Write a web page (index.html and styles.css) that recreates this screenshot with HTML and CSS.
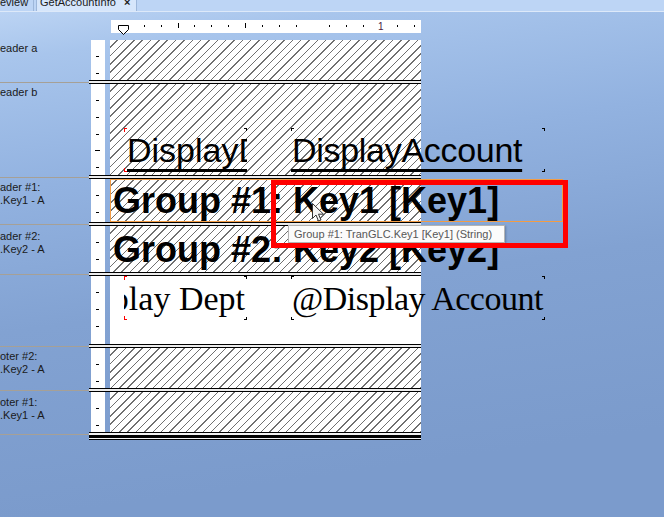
FILE: index.html
```html
<!DOCTYPE html>
<html lang="en">
<head>
    <meta charset="UTF-8">
    <meta name="viewport" content="width=device-width, initial-scale=1.0">
    <title>GetAccountInfo - Report Designer</title>
    <link rel="stylesheet" href="styles.css">
</head>
<body>
    <div class="tabbar">
        <div class="tab">eview</div>
        <div class="tab tab-active">GetAccountInfo <span class="tab-close">×</span></div>
    </div>

    <div class="hruler">
        <svg class="marker" width="11" height="10" viewBox="0 0 11 10">
            <path d="M0.5 0.5 H10.5 V4.5 L5.5 9.5 L0.5 4.5 Z" fill="#fff" stroke="#000" stroke-width="1"/>
        </svg>
        <span class="hruler-num">1</span>
    </div>

    <div class="designer">
        <!-- header a -->
        <div class="row band-a">
            <div class="label">eader a</div>
            <div class="page">
                <div class="vruler"></div>
                <div class="area hatch"></div>
            </div>
        </div>
        <div class="row sep">
            <div class="label-line"></div>
            <div class="dbl"></div>
        </div>

        <!-- header b -->
        <div class="row band-b">
            <div class="label">eader b</div>
            <div class="page">
                <div class="vruler vruler-long"></div>
                <div class="area hatch area-fields">
                    <div class="field field-short corners-red">
                        <div class="hdr-text">DisplayDept</div>
                    </div>
                    <div class="field field-wide corners">
                        <div class="hdr-text hdr-text-tight">DisplayAccount</div>
                    </div>
                </div>
            </div>
        </div>
        <div class="row sep">
            <div class="label-line"></div>
            <div class="dbl"></div>
        </div>

        <!-- group header 1 -->
        <div class="row band-g1">
            <div class="label">ader #1:<br>.Key1 - A</div>
            <div class="page">
                <div class="vruler"></div>
                <div class="area hatch">
                    <div class="group-box">Group #1: Key1 [Key1]</div>
                </div>
            </div>
        </div>
        <div class="row sep">
            <div class="label-line"></div>
            <div class="dbl"></div>
        </div>

        <!-- group header 2 -->
        <div class="row band-g2">
            <div class="label label-low">ader #2:<br>.Key2 - A</div>
            <div class="page">
                <div class="vruler"></div>
                <div class="area hatch">
                    <div class="group-text">Group #2: Key2 [Key2]</div>
                </div>
            </div>
        </div>
        <div class="row sep">
            <div class="label-line"></div>
            <div class="dbl"></div>
        </div>

        <!-- detail -->
        <div class="row band-detail">
            <div class="label"></div>
            <div class="page">
                <div class="vruler"></div>
                <div class="area area-plain area-detail">
                    <div class="field field-short corners-red detail-clip">
                        <div class="detail-text">@Display Dept</div>
                    </div>
                    <div class="field field-wide corners">
                        <div class="detail-text detail-text-left">@Display Account</div>
                    </div>
                </div>
            </div>
        </div>
        <div class="row sep">
            <div class="label-line"></div>
            <div class="dbl"></div>
        </div>

        <!-- group footer 2 -->
        <div class="row band-f2">
            <div class="label">oter #2:<br>.Key2 - A</div>
            <div class="page">
                <div class="vruler"></div>
                <div class="area hatch"></div>
            </div>
        </div>
        <div class="row sep">
            <div class="label-line"></div>
            <div class="dbl"></div>
        </div>

        <!-- group footer 1 -->
        <div class="row band-f1">
            <div class="label label-low">oter #1:<br>.Key1 - A</div>
            <div class="page">
                <div class="vruler"></div>
                <div class="area hatch"></div>
            </div>
        </div>
        <div class="row sep-end">
            <div class="label-line label-line-top"></div>
            <div class="dbl-end"></div>
        </div>
    </div>

    <div class="tooltip">Group #1: TranGLC.Key1 [Key1] (String)</div>
    <svg class="cursor" width="13" height="20" viewBox="0 0 13 20">
        <path d="M0.5 0.5 L0.5 15.5 L4 12 L6.5 18 L9 17 L6.5 11.2 L11.5 11.2 Z" fill="#f4f4f4" stroke="#333" stroke-width="1" stroke-linejoin="round"/>
    </svg>
    <div class="highlight"></div>
</body>
</html>
```

FILE: styles.css
```css
body {
    margin: 0;
    width: 664px;
    height: 517px;
    overflow: hidden;
    position: relative;
    font-family: "Liberation Sans", Arial, sans-serif;
    background: linear-gradient(172deg, #c0d7f5 0px, #a8c5ec 60px, #92b2e0 190px, #82a2d2 330px, #7b9bcc 517px);
}

/* tab strip */
.tabbar {
    display: flex;
    height: 11px;
    overflow: hidden;
    background: #bdd5f5;
    border-bottom: 1px solid #dde9f9;
    font-size: 11px;
    color: #1b1b1b;
}

.tab {
    margin-top: -4px;
    line-height: 13px;
    height: 15px;
    width: 33px;
    border-right: 1px solid #9db7da;
    white-space: nowrap;
}

.tab-active {
    width: 96px;
    margin-left: 2px;
    padding-left: 3px;
    background: #d6e6fb;
    border-left: 1px solid #9db7da;
}

.tab-close {
    margin-left: 5px;
    font-weight: bold;
}

/* top ruler */
.hruler {
    margin: 8px 0 0 111px;
    width: 310px;
    height: 13px;
    display: flex;
    align-items: flex-start;
    background:
        repeating-linear-gradient(to right, transparent 0 66.5px, #000 66.5px 67.5px) 0 3px / 100% 5px no-repeat,
        repeating-linear-gradient(to right, transparent 0 15.875px, #000 15.875px 16.875px) 0 5px / 100% 2px no-repeat,
        #fff;
}

.marker {
    display: block;
    margin: 5px 0 0 7px;
}

.hruler-num {
    margin: 1px 0 0 248px;
    padding: 0 1px;
    background: #fff;
    font-size: 10px;
    line-height: 11px;
    color: #4a1840;
}

/* design surface */
.designer {
    margin-top: 7px;
}

.row {
    display: flex;
}

.label {
    width: 89px;
    flex-shrink: 0;
    box-sizing: border-box;
    padding-top: 2px;
    font-size: 11px;
    line-height: 13px;
    color: #1a1a1a;
    white-space: nowrap;
    overflow: hidden;
}

.label-low {
    padding-top: 4px;
}

.page {
    width: 332px;
    display: flex;
    flex-shrink: 0;
}

.vruler {
    width: 14px;
    margin: 0 5px 0 2px;
    flex-shrink: 0;
    background:
        repeating-linear-gradient(to bottom, transparent 0 15.875px, #000 15.875px 16.875px) 5px 0 / 3px 100% no-repeat,
        #fff;
}

.vruler-long {
    background:
        linear-gradient(#000, #000) 4px 66px / 5px 1px no-repeat,
        repeating-linear-gradient(to bottom, transparent 0 15.875px, #000 15.875px 16.875px) 5px 0 / 3px 100% no-repeat,
        #fff;
}

.area {
    width: 311px;
    flex-shrink: 0;
    box-sizing: border-box;
    display: flex;
}

.hatch {
    background:
        repeating-linear-gradient(135deg, transparent 0 4.9px, #707070 4.9px 5.9px),
        #fff;
}

.area-plain {
    background: #fff;
}

.band-a { height: 40px; }
.band-b { height: 91px; }
.band-g1 { height: 43px; }
.band-g2 { height: 46px; }
.band-detail { height: 68px; }
.band-f2 { height: 40px; }
.band-f1 { height: 40px; }

/* section separators */
.sep {
    height: 4px;
}

.label-line {
    width: 89px;
    height: 1px;
    align-self: center;
    background: #a6a096;
}

.label-line-top {
    align-self: flex-start;
    margin-top: 2px;
}

.dbl {
    width: 332px;
    box-sizing: border-box;
    border-top: 1px solid #000;
    border-bottom: 1px solid #000;
    background: #ececec;
}

.sep-end {
    height: 8px;
}

.dbl-end {
    width: 332px;
    background: linear-gradient(to bottom, #000 0 1px, #f2f2f2 1px 3px, #000 3px 6px, #f2f2f2 6px 7px, #000 7px 8px);
}

/* text boxes */
.area-fields {
    padding: 44px 0 0 14px;
    gap: 44px;
}

.area-detail {
    padding-left: 14px;
    gap: 44px;
}

.field {
    flex-shrink: 0;
    box-sizing: border-box;
    height: 44px;
    overflow: hidden;
}

.field-short {
    width: 123px;
}

.field-wide {
    width: 254px;
    overflow: visible;
}

.corners {
    background:
        linear-gradient(#000, #000) left top / 3px 1px no-repeat,
        linear-gradient(#000, #000) left top / 1px 3px no-repeat,
        linear-gradient(#000, #000) right top / 3px 1px no-repeat,
        linear-gradient(#000, #000) right top / 1px 3px no-repeat,
        linear-gradient(#000, #000) left bottom / 3px 1px no-repeat,
        linear-gradient(#000, #000) left bottom / 1px 3px no-repeat,
        linear-gradient(#000, #000) right bottom / 3px 1px no-repeat,
        linear-gradient(#000, #000) right bottom / 1px 3px no-repeat;
}

.corners-red {
    background:
        linear-gradient(#f00, #f00) left top / 3px 1px no-repeat,
        linear-gradient(#f00, #f00) left top / 1px 4px no-repeat,
        linear-gradient(#000, #000) right top / 3px 1px no-repeat,
        linear-gradient(#000, #000) right top / 1px 3px no-repeat,
        linear-gradient(#f00, #f00) left bottom / 3px 1px no-repeat,
        linear-gradient(#f00, #f00) left bottom / 1px 4px no-repeat,
        linear-gradient(#000, #000) right bottom / 3px 1px no-repeat,
        linear-gradient(#000, #000) right bottom / 1px 3px no-repeat;
}

.hdr-text {
    padding: 5px 0 0 3px;
    font-size: 34px;
    line-height: 34px;
    white-space: nowrap;
    color: #000;
    text-decoration: underline;
    text-decoration-thickness: 3px;
    text-underline-offset: 7px;
}

.hdr-text-tight {
    padding-left: 1px;
    letter-spacing: -0.3px;
}

.group-box {
    width: 453px;
    height: 43px;
    flex-shrink: 0;
    box-sizing: border-box;
    border: 1px solid #f39c44;
    padding: 3px 0 0 2px;
    font-size: 36px;
    line-height: 36px;
    font-weight: bold;
    white-space: nowrap;
    color: #000;
}

.group-text {
    padding: 6px 0 0 3px;
    font-size: 36px;
    line-height: 36px;
    font-weight: bold;
    white-space: nowrap;
    color: #000;
}

.detail-clip {
    display: flex;
    justify-content: flex-end;
    padding-right: 2px;
}

.detail-text {
    flex-shrink: 0;
    padding-top: 6px;
    font-family: "Liberation Serif", "Times New Roman", serif;
    font-size: 34px;
    line-height: 34px;
    white-space: nowrap;
    color: #000;
}

.detail-text-left {
    padding-left: 1px;
    letter-spacing: -0.5px;
}

/* overlays */
.tooltip {
    position: absolute;
    left: 288px;
    top: 225px;
    width: 217px;
    height: 18px;
    box-sizing: border-box;
    padding-left: 5px;
    background: #fbfbfb;
    border: 1px solid #b4b4b4;
    box-shadow: 1px 1px 2px rgba(0, 0, 0, 0.25);
    font-size: 11px;
    line-height: 16px;
    color: #575757;
    white-space: nowrap;
}

.cursor {
    position: absolute;
    left: 312px;
    top: 203px;
}

.highlight {
    position: absolute;
    left: 271px;
    top: 180px;
    width: 297px;
    height: 68px;
    box-sizing: border-box;
    border: 5px solid #ff0000;
}
```
